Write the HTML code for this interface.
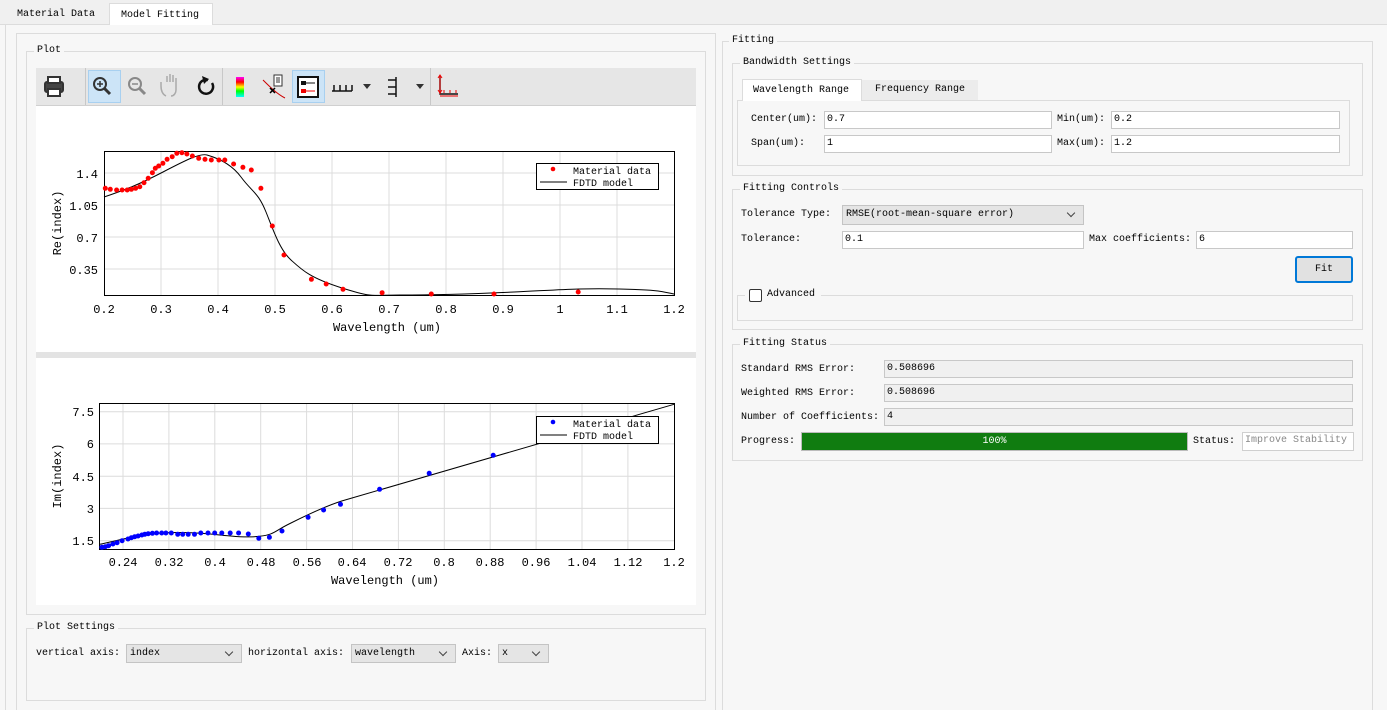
<!DOCTYPE html>
<html><head><meta charset="utf-8"><style>
*{box-sizing:border-box;margin:0;padding:0}
html,body{width:1387px;height:710px;overflow:hidden}
body{background:#f0f0f0;font-family:"Liberation Mono","Noto Sans CJK SC",monospace;font-size:10px;color:#000;position:relative}
.a{position:absolute}
.g{position:absolute;border:1px solid #dcdcdc}
.gt{position:absolute;background:#f7f7f7;padding:0 3px;top:-7px;left:7px;line-height:12px}
.in{position:absolute;background:#fff;border:1px solid #c8c8c8;height:18px;line-height:16px;padding-left:2px}
.ro{background:#f0f0f0}
.cb{position:absolute;background:#e5e5e5;border:1px solid #c4c4c4;height:19px;line-height:17px;padding-left:3px}
.cb:after{content:"";position:absolute;right:9px;top:4px;width:5px;height:5px;border-right:1px solid #444;border-bottom:1px solid #444;transform:rotate(45deg)}
.l{position:absolute;line-height:12px}
</style></head><body>
<div class="a" style="left:0;top:24px;width:1387px;height:686px;background:#f7f7f7;border-top:1px solid #dcdcdc"></div>
<div class="l" style="left:17px;top:9px">Material Data</div>
<div class="a" style="left:109px;top:3px;width:104px;height:22px;background:#fff;border:1px solid #dcdcdc;border-bottom:none"></div>
<div class="l" style="left:121px;top:10px">Model Fitting</div>
<div class="a" style="left:5px;top:24px;width:1px;height:686px;background:#dcdcdc"></div>
<div class="a" style="left:16px;top:33px;width:700px;height:677px;border:1px solid #dcdcdc;border-bottom:none"></div>

<div class="g" style="left:26px;top:51px;width:680px;height:564px"><div class="gt">Plot</div></div>
<div class="a" style="left:36px;top:68px;width:660px;height:38px;background:#e6e6e6;border-bottom:1px solid #d0d0d0"></div>
<div class="a" style="left:85px;top:68px;width:1px;height:37px;background:#c8c8c8"></div>
<div class="a" style="left:222px;top:68px;width:1px;height:37px;background:#c8c8c8"></div>
<div class="a" style="left:430px;top:68px;width:1px;height:37px;background:#c8c8c8"></div>
<div class="a" style="left:88px;top:70px;width:33px;height:33px;background:#cce4f7;border:1px solid #a8d0f0"></div>
<div class="a" style="left:292px;top:70px;width:33px;height:33px;background:#cce4f7;border:1px solid #a8d0f0"></div>
<svg class="a" style="left:36px;top:68px" width="430" height="38">
<g fill="none" stroke="#333" stroke-width="2">
<rect x="9" y="14" width="18" height="10" rx="2" fill="#444"/><rect x="12" y="9" width="12" height="6" fill="#fff"/><rect x="12" y="21" width="12" height="7" fill="#fff"/>
<circle cx="64" cy="16" r="6"/><line x1="68" y1="20" x2="74" y2="26" stroke-width="3"/><path d="M61 16h6M64 13v6" stroke-width="1.5"/>
<g stroke="#888"><circle cx="99" cy="16" r="6"/><line x1="103" y1="20" x2="109" y2="26" stroke-width="3"/><path d="M96 16h6" stroke-width="1.5"/></g>
<path d="M130 28c-4-2-5-6-5-10v-4M131 14v-6M134 14v-8M137 14v-7M140 15v-5v12c0 3-2 6-5 6" stroke="#aaa" stroke-width="1.5"/>
<path d="M172 12a7 7 0 1 0 4 3" stroke="#111" stroke-width="2.5"/><path d="M166 8l7 3-5 5z" fill="#111" stroke="none"/>
</g>
<defs><linearGradient id="rb" x1="0" y1="0" x2="0" y2="1"><stop offset="0" stop-color="#f0f"/><stop offset=".25" stop-color="#f00"/><stop offset=".5" stop-color="#ff0"/><stop offset=".7" stop-color="#0f0"/><stop offset="1" stop-color="#0ff"/></linearGradient></defs>
<rect x="200" y="9" width="8" height="20" fill="url(#rb)"/>
<path d="M227 12c6 6 14 14 22 18" stroke="#c00" fill="none"/><rect x="238" y="7" width="8" height="11" fill="#fff" stroke="#333"/><path d="M240 10h4M240 12h4M240 14h4" stroke="#333"/><path d="M234 20l5 5M239 20l-5 5" stroke="#000" stroke-width="1.5"/>
<rect x="262" y="9" width="20" height="20" fill="#fff" stroke="#111" stroke-width="2"/><rect x="265" y="13" width="5" height="4" fill="#111"/><path d="M270 15h9" stroke="#111"/><rect x="265" y="21" width="5" height="4" fill="#e00"/><path d="M270 23h9" stroke="#e00"/>
<path d="M296 23h20M298 17v6M304 17v6M310 17v6M316 17v6" stroke="#111" stroke-width="1.5"/><path d="M327 16h8l-4 5z" fill="#333"/>
<path d="M360 9v20M352 12h8M352 19h8M352 26h8" stroke="#111" stroke-width="1.5"/><path d="M380 16h8l-4 5z" fill="#333"/>
<path d="M404 8v18h18" stroke="#111" stroke-width="1.5" fill="none"/><path d="M402 10l2-3 2 3M402 22l2 3 2-3M404 7v19" stroke="#e00" fill="none"/><path d="M404 28h18M408 22v3M414 22v3M420 22v3" stroke="#e00"/>
</svg>

<div class="a" style="left:36px;top:106px;width:660px;height:246px;background:#fff"></div>
<div class="a" style="left:36px;top:352px;width:660px;height:6px;background:#e3e3e3"></div>
<div class="a" style="left:36px;top:358px;width:660px;height:247px;background:#fff"></div>
<svg class="a" style="left:0;top:0" width="720" height="610" font-family="Liberation Mono, monospace" font-size="12">
<g stroke="#dcdcdc" stroke-width="1">
<path d="M161 151V295M218 151V295M275 151V295M332 151V295M389 151V295M446 151V295M503 151V295M560 151V295M617 151V295M104 173H674M104 205H674M104 237H674M104 269H674"/>
<path d="M168.9 403V549M214.8 403V549M260.7 403V549M306.6 403V549M352.5 403V549M398.4 403V549M444.3 403V549M490.2 403V549M536.1 403V549M582 403V549M627.9 403V549M99.5 411.7H674M99.5 443.9H674M99.5 476.2H674M99.5 508.4H674M99.5 540.7H674M123 403V549"/>
</g>
<rect x="104.5" y="151.5" width="570" height="144" fill="none" stroke="#000"/>
<rect x="99.5" y="403.5" width="575" height="146" fill="none" stroke="#000"/>
<path fill="none" stroke="#000" d="M104 197C125 190 140 184 163 172S200 153 207 155S230 162 241 177S258 192 266 212S280 250 291 260S310 278 342 288S370 295 400 295S470 294 514 292S580 288 619 289S660 291 674 294"/>
<path fill="none" stroke="#f00" stroke-width="5" stroke-linecap="round" d="M105.3 188.3h0M110.3 189.3h0M116.6 190h0M122.1 190h0M127.2 190h0M131.4 189.3h0M135.6 188.3h0M139.8 186.7h0M144 182.7h0M148.2 178.3h0M152.4 172.7h0M155.3 168.3h0M158.7 166h0M162.9 163.3h0M167.1 159.3h0M172.2 156.7h0M176.8 153.3h0M181.9 152.7h0M186.9 154h0M192.4 156h0M198.7 158.3h0M205 159.3h0M211.3 160h0M218.9 160h0M224.8 160h0M233.6 164h0M242.9 167.3h0M251.3 170h0M260.9 188.3h0M272.3 226h0M284 255h0M311.4 279.3h0M326.2 284h0M343 289.3h0M382.1 292.7h0M431.3 294h0M494 294h0M578.2 292h0"/>
<path fill="none" stroke="#000" d="M99.8 544.3C115 541 135 536 150 534S190 532 210 534S245 538 259.7 536.3S275 531 287 525S320 508 341.7 501L674 404.3"/>
<path fill="none" stroke="#00f" stroke-width="5" stroke-linecap="round" d="M101.9 547.3h0M105.3 546.7h0M108.6 545.7h0M112.9 544h0M117.1 542.7h0M122.1 540.7h0M128 539h0M131.4 537.7h0M134.7 536.7h0M138.1 536h0M141.9 535h0M144.8 534.3h0M148.2 533.7h0M152.4 533.3h0M156.6 533h0M161.7 533h0M165.9 533h0M171.3 533h0M177.7 534.3h0M182.7 534.3h0M188.2 534.3h0M194.5 534.3h0M200.8 533h0M208 533h0M214.7 533h0M221.8 533h0M230.2 533h0M238.6 533h0M248.3 534h0M258.8 538.3h0M269.4 537.3h0M282 531h0M308.1 517.3h0M323.6 510h0M340.5 504.3h0M379.6 489.3h0M429.2 473.3h0M493.2 455.3h0"/>
<rect x="536.5" y="163.5" width="122" height="26" fill="#fff" stroke="#000"/>
<circle cx="553" cy="169" r="2.3" fill="#f00"/><line x1="540" y1="182" x2="567" y2="182" stroke="#000"/>
<text x="573" y="174" font-size="10">Material data</text><text x="573" y="186" font-size="10">FDTD model</text>
<rect x="536.5" y="416.5" width="122" height="27" fill="#fff" stroke="#000"/>
<circle cx="553" cy="422" r="2.3" fill="#00f"/><line x1="540" y1="435" x2="567" y2="435" stroke="#000"/>
<text x="573" y="427" font-size="10">Material data</text><text x="573" y="439" font-size="10">FDTD model</text>
<g text-anchor="end"><text x="98" y="178">1.4</text><text x="98" y="210">1.05</text><text x="98" y="242">0.7</text><text x="98" y="274">0.35</text>
<text x="94" y="416">7.5</text><text x="94" y="448">6</text><text x="94" y="481">4.5</text><text x="94" y="513">3</text><text x="94" y="545">1.5</text></g>
<g text-anchor="middle"><text x="104" y="313">0.2</text><text x="161" y="313">0.3</text><text x="218" y="313">0.4</text><text x="275" y="313">0.5</text><text x="332" y="313">0.6</text><text x="389" y="313">0.7</text><text x="446" y="313">0.8</text><text x="503" y="313">0.9</text><text x="560" y="313">1</text><text x="617" y="313">1.1</text><text x="674" y="313">1.2</text>
<text x="387" y="331">Wavelength (um)</text>
<text x="123" y="566">0.24</text><text x="169" y="566">0.32</text><text x="215" y="566">0.4</text><text x="261" y="566">0.48</text><text x="307" y="566">0.56</text><text x="352" y="566">0.64</text><text x="398" y="566">0.72</text><text x="444" y="566">0.8</text><text x="490" y="566">0.88</text><text x="536" y="566">0.96</text><text x="582" y="566">1.04</text><text x="628" y="566">1.12</text><text x="674" y="566">1.2</text>
<text x="385" y="584">Wavelength (um)</text>
<text transform="translate(61 223) rotate(-90)">Re(index)</text>
<text transform="translate(61 476) rotate(-90)">Im(index)</text></g>
</svg>

<div class="g" style="left:26px;top:628px;width:680px;height:73px"><div class="gt">Plot Settings</div></div>
<div class="l" style="left:36px;top:648px">vertical axis:</div>
<div class="cb" style="left:126px;top:644px;width:116px">index</div>
<div class="l" style="left:248px;top:648px">horizontal axis:</div>
<div class="cb" style="left:351px;top:644px;width:105px">wavelength</div>
<div class="l" style="left:462px;top:648px">Axis:</div>
<div class="cb" style="left:498px;top:644px;width:51px">x</div>

<div class="a" style="left:722px;top:41px;width:651px;height:669px;border:1px solid #dcdcdc;border-bottom:none"><div class="gt" style="left:6px">Fitting</div></div>
<div class="g" style="left:732px;top:63px;width:631px;height:113px"><div class="gt">Bandwidth Settings</div></div>
<div class="a" style="left:737px;top:100px;width:613px;height:66px;border:1px solid #dcdcdc;background:#f7f7f7"></div>
<div class="a" style="left:862px;top:80px;width:116px;height:20px;background:#ececec"></div>
<div class="l" style="left:875px;top:84px">Frequency Range</div>
<div class="a" style="left:742px;top:79px;width:120px;height:22px;background:#fff;border:1px solid #dcdcdc;border-bottom:none"></div>
<div class="l" style="left:753px;top:85px">Wavelength Range</div>
<div class="l" style="left:751px;top:114px">Center(um):</div><div class="in" style="left:824px;top:111px;width:228px">0.7</div>
<div class="l" style="left:1057px;top:114px">Min(um):</div><div class="in" style="left:1111px;top:111px;width:229px">0.2</div>
<div class="l" style="left:751px;top:138px">Span(um):</div><div class="in" style="left:824px;top:135px;width:228px">1</div>
<div class="l" style="left:1057px;top:138px">Max(um):</div><div class="in" style="left:1111px;top:135px;width:229px">1.2</div>

<div class="g" style="left:732px;top:189px;width:631px;height:141px"><div class="gt">Fitting Controls</div></div>
<div class="l" style="left:741px;top:209px">Tolerance Type:</div>
<div class="cb" style="left:842px;top:205px;width:242px;height:20px">RMSE(root-mean-square error)</div>
<div class="l" style="left:741px;top:234px">Tolerance:</div><div class="in" style="left:842px;top:231px;width:242px">0.1</div>
<div class="l" style="left:1089px;top:234px">Max coefficients:</div><div class="in" style="left:1196px;top:231px;width:157px">6</div>
<div class="a" style="left:1295px;top:256px;width:58px;height:27px;background:#e1e1e1;border:2px solid #0078d7;border-radius:3px;text-align:center;line-height:23px">Fit</div>
<div class="a" style="left:737px;top:295px;width:616px;height:26px;border:1px solid #dcdcdc"></div>
<div class="a" style="left:745px;top:289px;width:76px;height:12px;background:#f7f7f7"></div>
<div class="a" style="left:749px;top:289px;width:13px;height:13px;border:1px solid #333;border-radius:2px;background:#fff"></div>
<div class="l" style="left:767px;top:289px">Advanced</div>

<div class="g" style="left:732px;top:344px;width:631px;height:117px"><div class="gt">Fitting Status</div></div>
<div class="l" style="left:741px;top:364px">Standard RMS Error:</div><div class="in ro" style="left:884px;top:360px;width:469px">0.508696</div>
<div class="l" style="left:741px;top:388px">Weighted RMS Error:</div><div class="in ro" style="left:884px;top:384px;width:469px">0.508696</div>
<div class="l" style="left:741px;top:412px">Number of Coefficients:</div><div class="in ro" style="left:884px;top:408px;width:469px">4</div>
<div class="l" style="left:741px;top:436px">Progress:</div>
<div class="a" style="left:801px;top:432px;width:387px;height:19px;background:#107c10;border:1px solid #bcbcbc;color:#fff;text-align:center;line-height:17px">100%</div>
<div class="l" style="left:1193px;top:436px">Status:</div>
<div class="in" style="left:1242px;top:432px;width:112px;height:19px;color:#888;border-color:#cfcfcf">Improve Stability</div>
</body></html>
